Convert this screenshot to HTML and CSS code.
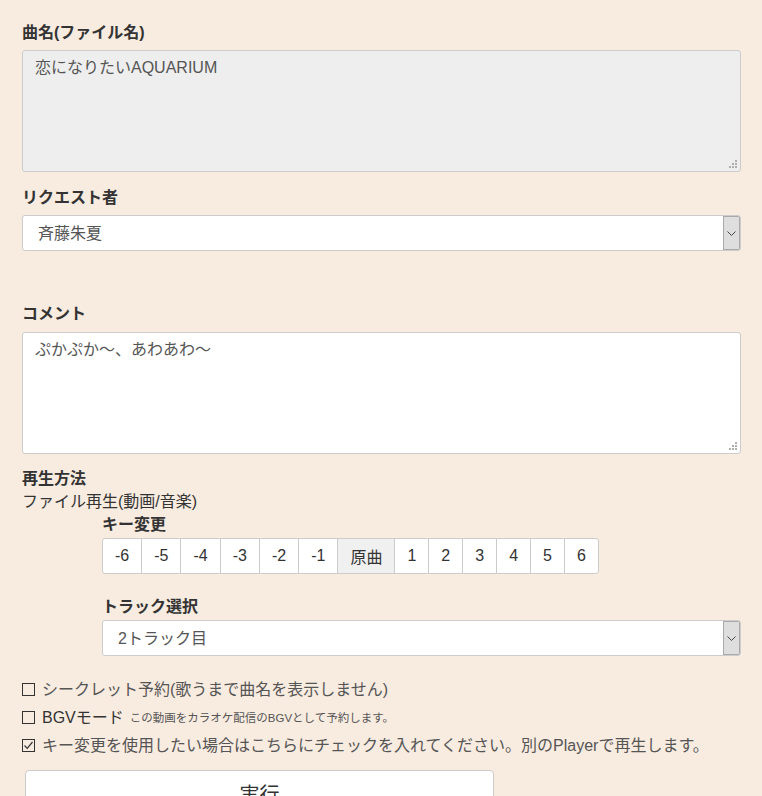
FILE: index.html
```html
<!DOCTYPE html>
<html lang="ja">
<head>
<meta charset="utf-8">
<title>リクエスト</title>
<link rel="stylesheet" href="styles.css">
</head>
<body>
<form class="page">
  <div class="group g-song">
    <label class="lbl">曲名(ファイル名)</label>
    <textarea class="ta ta-readonly" readonly>恋になりたいAQUARIUM</textarea>
  </div>

  <div class="group g-req">
    <label class="lbl">リクエスト者</label>
    <div class="sel">
      <select class="sel-input"><option>斉藤朱夏</option></select>
      <span class="sel-btn"><svg width="9" height="5" viewBox="0 0 9 5"><path d="M0.5 0.5 L4.5 4.5 L8.5 0.5" fill="none" stroke="#444" stroke-width="1"/></svg></span>
    </div>
  </div>

  <div class="group g-comment">
    <label class="lbl">コメント</label>
    <textarea class="ta">ぷかぷか～、あわあわ～</textarea>
  </div>

  <div class="group g-play">
    <div class="lbl">再生方法</div>
    <div class="txt">ファイル再生(動画/音楽)</div>
    <div class="sub">
      <div class="lbl">キー変更</div>
      <div class="keys">
        <span class="key">-6</span><span class="key">-5</span><span class="key">-4</span><span class="key">-3</span><span class="key">-2</span><span class="key">-1</span><span class="key key-on">原曲</span><span class="key">1</span><span class="key">2</span><span class="key">3</span><span class="key">4</span><span class="key">5</span><span class="key">6</span>
      </div>
      <div class="lbl lbl-track">トラック選択</div>
      <div class="sel">
        <select class="sel-input"><option>2トラック目</option></select>
        <span class="sel-btn"><svg width="9" height="5" viewBox="0 0 9 5"><path d="M0.5 0.5 L4.5 4.5 L8.5 0.5" fill="none" stroke="#444" stroke-width="1"/></svg></span>
      </div>
    </div>
  </div>

  <div class="checks">
    <div class="chk"><span class="box"></span><span>シークレット予約(歌うまで曲名を表示しません)</span></div>
    <div class="chk"><span class="box"></span><span class="dark">BGVモード</span><small class="note">この動画をカラオケ配信のBGVとして予約します。</small></div>
    <div class="chk"><span class="box"><svg width="11" height="11" viewBox="0 0 11 11"><path d="M1.5 5.5 L4.2 8.3 L9.5 2" fill="none" stroke="#333" stroke-width="1.2"/></svg></span><span>キー変更を使用したい場合はこちらにチェックを入れてください。別のPlayerで再生します。</span></div>
  </div>

  <div class="actions">
    <button type="button" class="run">実行</button>
  </div>
</form>
</body>
</html>
```

FILE: styles.css
```css
* { box-sizing: border-box; }
html, body { margin: 0; padding: 0; }
body {
  background: #f8ebe0;
  font-family: "Liberation Sans", "Noto Sans CJK JP", sans-serif;
  font-size: 16px;
  color: #333;
}
.page {
  padding: 23px 21px 0 22px;
  display: flex;
  flex-direction: column;
}
.lbl {
  display: block;
  font-weight: bold;
  font-size: 16px;
  line-height: 20px;
  color: #333;
  margin-bottom: 7px;
}
.ta {
  display: block;
  width: 100%;
  height: 122px;
  border: 1px solid #ccc;
  border-radius: 3px;
  background-color: #fff;
  padding: 6px 12px;
  font-family: "Liberation Sans", "Noto Sans CJK JP", sans-serif;
  font-size: 16px;
  line-height: 22px;
  color: #555;
  resize: none;
  outline: none;
  background-image:
    linear-gradient(#b0b0b0, #b0b0b0),
    linear-gradient(#b0b0b0, #b0b0b0),
    linear-gradient(#b0b0b0, #b0b0b0),
    linear-gradient(#b0b0b0, #b0b0b0),
    linear-gradient(#b0b0b0, #b0b0b0),
    linear-gradient(#b0b0b0, #b0b0b0);
  background-size: 2px 2px;
  background-repeat: no-repeat;
  background-position:
    right 3px bottom 3px,
    right 6px bottom 3px,
    right 9px bottom 3px,
    right 3px bottom 6px,
    right 6px bottom 6px,
    right 3px bottom 9px;
}
.ta-readonly { background-color: #eee; }
.g-req { margin-top: 16px; }
.g-comment { margin-top: 53px; }
.g-comment .lbl { margin-bottom: 8px; }
.g-play { margin-top: 15px; }
.g-play > .lbl { margin-bottom: 3px; }
.txt { line-height: 20px; color: #333; }
.sub { padding-left: 80px; margin-top: 3px; }
.sub .lbl { margin-bottom: 3px; }
.lbl-track { margin-top: 23px; }

.sel {
  display: flex;
  height: 36px;
  border: 1px solid #ccc;
  border-radius: 3px;
  background: #fff;
  overflow: hidden;
}
.sel-input {
  flex: 1;
  appearance: none;
  -webkit-appearance: none;
  border: 0;
  background: transparent;
  padding: 0 15px;
  font-family: "Liberation Sans", "Noto Sans CJK JP", sans-serif;
  font-size: 16px;
  color: #555;
  outline: none;
}
.sel-btn {
  width: 17px;
  background: #dedede;
  border: 1px solid #a9a9a9;
  display: flex;
  align-items: center;
  justify-content: center;
}

.keys {
  display: inline-flex;
  border: 1px solid #ccc;
  border-radius: 3px;
  background: #fff;
  height: 36px;
  overflow: hidden;
}
.key {
  display: flex;
  align-items: center;
  justify-content: center;
  padding: 0 12px;
  border-left: 1px solid #ccc;
  color: #333;
  font-size: 16px;
}
.key:first-child { border-left: 0; }
.key-on { background: #f0f0f0; }

.checks {
  margin-top: 23px;
  display: flex;
  flex-direction: column;
  gap: 7px;
}
.chk {
  display: flex;
  align-items: center;
  height: 21px;
  color: #555;
  line-height: 21px;
}
.box {
  width: 13px;
  height: 13px;
  border: 1.3px solid #333;
  margin-right: 7px;
  display: flex;
  align-items: center;
  justify-content: center;
  flex-shrink: 0;
}
.dark { color: #333; }
.note {
  font-size: 11.5px;
  color: #555;
  margin-left: 6px;
  padding-top: 2px;
}

.actions { padding-left: 3px; margin-top: 14px; }
.run {
  width: 469px;
  height: 46px;
  background: #fff;
  border: 1px solid #ccc;
  border-radius: 4px;
  font-family: "Liberation Sans", "Noto Sans CJK JP", sans-serif;
  font-size: 20px;
  color: #333;
  padding: 0;
  display: block;
}
```
